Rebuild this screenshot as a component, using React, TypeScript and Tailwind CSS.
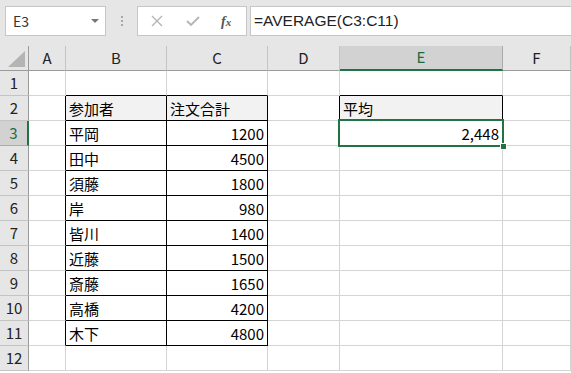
const cols = ["A", "B", "C", "D", "E", "F"];
const rows = [1, 2, 3, 4, 5, 6, 7, 8, 9, 10, 11, 12];

const names = ["平岡", "田中", "須藤", "岸", "皆川", "近藤", "斎藤", "高橋", "木下"];
const totals = ["1200", "4500", "1800", "980", "1400", "1500", "1650", "4200", "4800"];

// 罫線で囲まれた範囲
function isBox(r: number, c: number) {
  if ((c === 1 || c === 2) && r >= 2 && r <= 11) return true;
  if (c === 4 && r === 2) return true;
  return false;
}

function cellValue(r: number, c: number): { text: string; right?: boolean } | null {
  if (r === 2 && c === 1) return { text: "参加者" };
  if (r === 2 && c === 2) return { text: "注文合計" };
  if (r === 2 && c === 4) return { text: "平均" };
  if (r === 3 && c === 4) return { text: "2,448", right: true };
  if (r >= 3 && r <= 11 && c === 1) return { text: names[r - 3] };
  if (r >= 3 && r <= 11 && c === 2) return { text: totals[r - 3], right: true };
  return null;
}

function App() {
  return (
    <div className="w-[571px] h-[373px] overflow-hidden bg-white text-black font-['Noto_Sans_CJK_JP',sans-serif]">
      {/* 数式バー */}
      <div className="h-[46px] bg-[#e6e6e6] flex items-start pt-[6px] pl-[5px]">
        <div className="w-[101px] h-[30px] bg-white border border-[#c6c6c6] flex items-center justify-between pl-[7px] pr-[6px]">
          <span className="text-[14px] text-[#333]">E3</span>
          <span className="w-0 h-0 border-l-[4px] border-r-[4px] border-t-[4px] border-l-transparent border-r-transparent border-t-[#777]"></span>
        </div>
        <div className="w-[31px] h-[30px] flex flex-col items-center justify-center gap-[2px]">
          <span className="w-[2px] h-[2px] bg-[#a8a8a8]"></span>
          <span className="w-[2px] h-[2px] bg-[#a8a8a8]"></span>
          <span className="w-[2px] h-[2px] bg-[#a8a8a8]"></span>
        </div>
        <div className="w-[110px] h-[30px] bg-white border border-[#c6c6c6] flex items-center">
          <svg className="ml-[13px]" width="12" height="12" viewBox="0 0 12 12">
            <path d="M1 1 L11 11 M11 1 L1 11" stroke="#b4b4b4" strokeWidth="1.3" fill="none" />
          </svg>
          <svg className="ml-[23px]" width="14" height="12" viewBox="0 0 14 12">
            <path d="M1 6 L5 10 L13 2" stroke="#b4b4b4" strokeWidth="1.8" fill="none" />
          </svg>
          <span className="ml-[21px] text-[14px] italic font-['Liberation_Serif',serif] text-[#555] font-bold">
            f<span className="text-[11px]">x</span>
          </span>
        </div>
        <div className="ml-[3px] flex-1 h-[30px] bg-white border border-[#c6c6c6] border-r-0 flex items-center pl-[3px]">
          <span className="text-[15.5px] text-[#222] font-['Liberation_Sans',sans-serif]">=AVERAGE(C3:C11)</span>
        </div>
      </div>

      {/* シート */}
      <div className="grid grid-cols-[29px_37px_101px_101px_72px_163px_1fr] auto-rows-[25px]">
        <div className="bg-[#e6e6e6] border-r border-b border-[#9b9b9b] relative">
          <svg className="absolute left-[8px] top-[5px]" width="17" height="16" viewBox="0 0 17 16">
            <path d="M17 0 L17 16 L0 16 Z" fill="#b4b4b4" />
          </svg>
        </div>
        {cols.map((col) => (
          <div
            key={col}
            className={`flex items-center justify-center text-[15px] ${
              col === "E"
                ? "bg-[#d2d2d2] text-[#1d6a3e] border-b-2 border-b-[#217346] border-r border-r-[#ababab]"
                : "bg-[#e6e6e6] text-[#222] border-b border-b-[#9b9b9b] border-r border-r-[#c4c4c4]"
            }`}
          >
            {col}
          </div>
        ))}

        {rows.map((r) => (
          <div key={r} className="contents">
            <div
              className={`flex items-center justify-center text-[15px] border-b ${
                r === 3
                  ? "bg-[#d2d2d2] text-[#1d6a3e] border-r-2 border-r-[#217346] border-b-[#ababab]"
                  : "bg-[#e6e6e6] text-[#222] border-r border-r-[#9b9b9b] border-b-[#c4c4c4]"
              }`}
            >
              {r}
            </div>
            {cols.map((col, c) => {
              const v = cellValue(r, c);
              const rightBlack = isBox(r, c) || isBox(r, c + 1);
              const bottomBlack = isBox(r, c) || isBox(r + 1, c);
              const head = r === 2 && isBox(r, c);
              return (
                <div
                  key={col}
                  className={`relative flex items-center pt-[1px] text-[15px] leading-none border-r border-b ${
                    rightBlack ? "border-r-black" : "border-r-[#d4d4d4]"
                  } ${bottomBlack ? "border-b-black" : "border-b-[#d4d4d4]"} ${
                    head ? "bg-[#f2f2f2]" : "bg-white"
                  } ${v?.right ? "justify-end pr-[3px]" : "justify-start pl-[3px]"}`}
                >
                  {v ? <span className="whitespace-nowrap">{v.text}</span> : null}
                  {r === 3 && col === "E" ? (
                    <>
                      <div className="absolute left-[-2px] top-[-2px] right-[-2px] bottom-[-2px] border-2 border-[#217346] z-10"></div>
                      <div className="absolute right-[-5px] bottom-[-5px] w-[7px] h-[7px] bg-[#217346] border border-white z-20"></div>
                    </>
                  ) : null}
                </div>
              );
            })}
          </div>
        ))}
      </div>
    </div>
  );
}

export default App;
